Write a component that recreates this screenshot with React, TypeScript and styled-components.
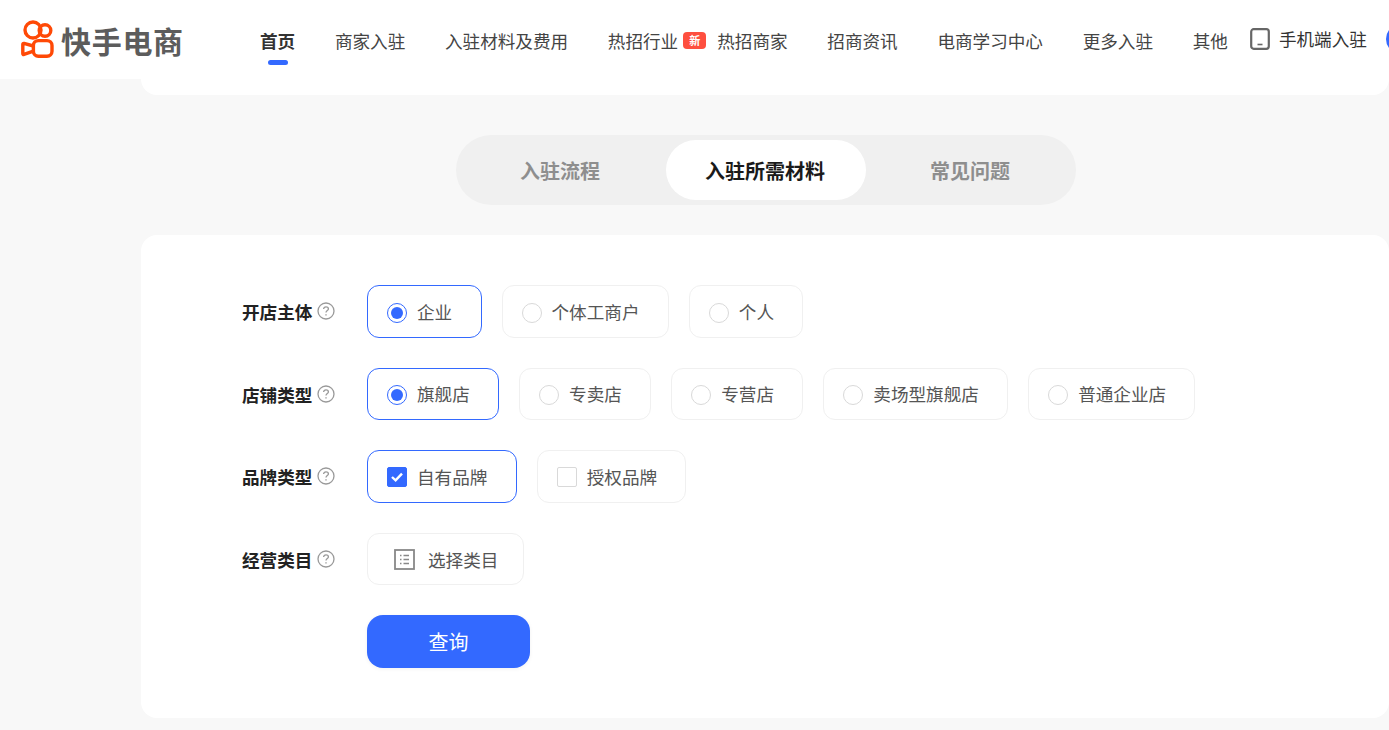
import styled, { createGlobalStyle } from 'styled-components'

const GlobalStyle = createGlobalStyle`
  html, body {
    margin: 0;
    height: 100%;
    overflow: hidden;
    background: #f8f8f8;
  }
  * {
    box-sizing: border-box;
  }
  body {
    font-family: "Noto Sans CJK SC", "Liberation Sans", sans-serif;
    font-size: 17.6px;
    color: #444;
  }
`

const BLUE = '#3369ff'

const Header = styled.header`
  position: relative;
  z-index: 1;
  display: flex;
  align-items: center;
  height: 79px;
  padding-left: 21px;
  background: #fff;
  white-space: nowrap;
`

const Logo = styled.div`
  display: flex;
  align-items: center;
  gap: 7px;
  width: 239px;
  flex: none;
`

const LogoText = styled.span`
  font-size: 30px;
  line-height: 38px;
  font-weight: 700;
  letter-spacing: 0.7px;
  color: #5c5c5c;
`

const Nav = styled.nav`
  display: flex;
  align-items: center;
  gap: 39.7px;
  padding-top: 2px;
  flex: none;
`

const NavLink = styled.a<{ $active?: boolean }>`
  position: relative;
  display: flex;
  align-items: center;
  line-height: 24px;
  font-weight: ${(p) => (p.$active ? 700 : 400)};
  color: ${(p) => (p.$active ? '#333' : '#444')};

  ${(p) =>
    p.$active &&
    `&::after {
      content: '';
      position: absolute;
      left: 8px;
      top: 31px;
      width: 20px;
      height: 5px;
      border-radius: 3px;
      background: ${BLUE};
    }`}
`

const NavGroup = styled.div`
  display: flex;
  align-items: center;
  gap: 11px;
`

const HotLink = styled(NavLink)`
  gap: 5px;
`

const NewBadge = styled.span`
  width: 23px;
  height: 17px;
  border-radius: 4px;
  background: #fe4f3f;
  color: #fff;
  font-size: 11px;
  font-weight: 700;
  line-height: 17px;
  text-align: center;
`

const MobileEntry = styled.a`
  display: flex;
  align-items: center;
  gap: 9px;
  margin-left: 22px;
  margin-top: -2px;
  color: #333;
  line-height: 24px;
  flex: none;
`

const Avatar = styled.span`
  width: 30px;
  height: 30px;
  margin-left: 19px;
  margin-top: -2px;
  border-radius: 50%;
  background: ${BLUE};
  flex: none;
`

const Main = styled.main`
  display: flex;
  flex-direction: column;
  padding-left: 141px;
`

const Card = styled.section`
  width: 1248px;
  background: #fff;
  border-radius: 16px;
`

const TopCard = styled(Card)`
  height: 60px;
  margin-top: -44px;
`

const Tabs = styled.div`
  align-self: center;
  display: flex;
  gap: 5px;
  margin: 40px 0 30px 2px;
  padding: 5px;
  border-radius: 35px;
  background: #f0f0f0;
`

const Tab = styled.button<{ $active?: boolean }>`
  width: 200px;
  height: 60px;
  padding: 0 2px 0 0;
  border: 0;
  border-radius: 30px;
  background: ${(p) => (p.$active ? '#fff' : 'transparent')};
  color: ${(p) => (p.$active ? '#1a1a1a' : '#8e8e8e')};
  font: 700 20px "Noto Sans CJK SC", sans-serif;
`

const FormCard = styled(Card)`
  display: flex;
  flex-direction: column;
  gap: 30px;
  height: 483px;
  padding: 50px 0 0 101px;
`

const Row = styled.div`
  display: flex;
  align-items: center;
`

const Label = styled.div`
  display: flex;
  align-items: center;
  gap: 5px;
  width: 125px;
  flex: none;
  font-weight: 700;
  color: #222;
  line-height: 24px;
`

const LabelText = styled.span`
  padding-top: 2px;
`

const Options = styled.div`
  display: flex;
  gap: 20px;
`

const Option = styled.div<{ $checked?: boolean }>`
  display: flex;
  align-items: center;
  gap: 10px;
  height: 52.6px;
  padding: 0 28.3px 0 19px;
  border: 1px solid ${(p) => (p.$checked ? BLUE : '#f0f0f0')};
  border-radius: 12px;
  background: #fff;
  color: #555;
`

const Radio = styled.span<{ $checked?: boolean }>`
  position: relative;
  width: 20px;
  height: 20px;
  margin-top: 3px;
  border: 1px solid ${(p) => (p.$checked ? BLUE : '#d9d9d9')};
  border-radius: 50%;
  flex: none;

  ${(p) =>
    p.$checked &&
    `&::after {
      content: '';
      position: absolute;
      inset: 3px;
      border-radius: 50%;
      background: ${BLUE};
    }`}
`

const CheckBox = styled.span<{ $checked?: boolean }>`
  display: flex;
  align-items: center;
  justify-content: center;
  width: 20px;
  height: 20px;
  margin-top: 2px;
  border: 1px solid ${(p) => (p.$checked ? BLUE : '#d9d9d9')};
  border-radius: 2px;
  background: ${(p) => (p.$checked ? BLUE : '#fff')};
  flex: none;
`

const SelectOption = styled(Option)`
  gap: 13px;
  padding: 0 25px 0 26px;
`

const ButtonRow = styled.div`
  padding-left: 125px;
`

const QueryButton = styled.button`
  width: 163px;
  height: 53px;
  border: 0;
  border-radius: 16px;
  background: ${BLUE};
  box-shadow: 0 1px 4px rgba(0, 0, 0, 0.06);
  color: #fff;
  font: 400 20px "Noto Sans CJK SC", sans-serif;
`

const KuaishouMark = () => (
  <svg width="33" height="39" viewBox="0 0 33 39" fill="none" stroke="#ff4906" strokeWidth="3.4">
    <circle cx="12" cy="10" r="8" />
    <circle cx="24" cy="10.5" r="5.8" />
    <rect x="12.4" y="20.6" width="18.6" height="15.6" rx="5" />
    <path d="M12.4 26 L3 23.4 Q1.8 23.2 1.8 24.4 V33.4 Q1.8 34.8 3 34.4 L12.4 31.2" strokeLinejoin="round" />
  </svg>
)

const TabletIcon = () => (
  <svg width="20" height="22" viewBox="0 0 20 22" fill="none" stroke="#666">
    <rect x="1.2" y="1.2" width="17.6" height="19.6" rx="2.5" strokeWidth="2.2" />
    <path d="M7.5 16.5 H12.5" strokeWidth="1.6" />
  </svg>
)

const HelpIcon = () => (
  <svg width="18" height="18" viewBox="0 0 18 18" fill="none" stroke="#999">
    <circle cx="9" cy="9" r="8" strokeWidth="1.3" />
    <path d="M6.6 7.1 C6.6 5.6 7.7 4.8 9 4.8 C10.4 4.8 11.4 5.7 11.4 6.9 C11.4 8.4 9 8.7 9 10.6" strokeWidth="1.3" />
    <path d="M9 12.2 V13.6" strokeWidth="1.4" />
  </svg>
)

const CheckIcon = () => (
  <svg width="14" height="12" viewBox="0 0 14 12" fill="none" stroke="#fff" strokeWidth="2.4">
    <path d="M2 6 L5.6 9.4 L12 2.6" />
  </svg>
)

const ListIcon = () => (
  <svg width="21" height="21" viewBox="0 0 21 21" fill="none" stroke="#888">
    <rect x="1" y="1" width="19" height="19" strokeWidth="1.8" />
    <path d="M6 6.5 H7.5 M6 10.5 H7.5 M6 14.5 H7.5 M9.5 6.5 H15 M9.5 10.5 H15 M9.5 14.5 H15" strokeWidth="1.3" />
  </svg>
)

const rows = [
  { label: '开店主体', kind: 'radio', options: ['企业', '个体工商户', '个人'] },
  { label: '店铺类型', kind: 'radio', options: ['旗舰店', '专卖店', '专营店', '卖场型旗舰店', '普通企业店'] },
  { label: '品牌类型', kind: 'check', options: ['自有品牌', '授权品牌'] },
]

export default function App() {
  return (
    <>
      <GlobalStyle />
      <Header>
        <Logo>
          <KuaishouMark />
          <LogoText>快手电商</LogoText>
        </Logo>
        <Nav>
          <NavLink $active>首页</NavLink>
          <NavLink>商家入驻</NavLink>
          <NavLink>入驻材料及费用</NavLink>
          <NavGroup>
            <HotLink>
              热招行业
              <NewBadge>新</NewBadge>
            </HotLink>
            <NavLink>热招商家</NavLink>
          </NavGroup>
          <NavLink>招商资讯</NavLink>
          <NavLink>电商学习中心</NavLink>
          <NavLink>更多入驻</NavLink>
          <NavLink>其他</NavLink>
        </Nav>
        <MobileEntry>
          <TabletIcon />
          手机端入驻
        </MobileEntry>
        <Avatar />
      </Header>
      <Main>
        <TopCard />
        <Tabs>
          <Tab>入驻流程</Tab>
          <Tab $active>入驻所需材料</Tab>
          <Tab>常见问题</Tab>
        </Tabs>
        <FormCard>
          {rows.map((row) => (
            <Row key={row.label}>
              <Label>
                <LabelText>{row.label}</LabelText>
                <HelpIcon />
              </Label>
              <Options>
                {row.options.map((text, i) => (
                  <Option key={text} $checked={i === 0}>
                    {row.kind === 'radio' ? (
                      <Radio $checked={i === 0} />
                    ) : (
                      <CheckBox $checked={i === 0}>{i === 0 && <CheckIcon />}</CheckBox>
                    )}
                    {text}
                  </Option>
                ))}
              </Options>
            </Row>
          ))}
          <Row>
            <Label>
              <LabelText>经营类目</LabelText>
              <HelpIcon />
            </Label>
            <SelectOption>
              <ListIcon />
              选择类目
            </SelectOption>
          </Row>
          <ButtonRow>
            <QueryButton>查询</QueryButton>
          </ButtonRow>
        </FormCard>
      </Main>
    </>
  )
}
